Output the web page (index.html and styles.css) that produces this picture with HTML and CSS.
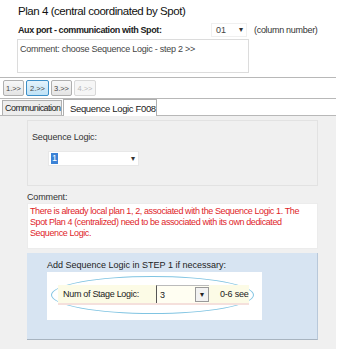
FILE: index.html
```html
<!DOCTYPE html>
<html lang="en">

<head>
    <meta charset="UTF-8">
    <title>Plan 4 - Sequence Logic</title>
    <link rel="stylesheet" href="styles.css">
</head>

<body>
    <div class="page">
        <div class="head">
            <h1 class="title">Plan 4 (central coordinated by Spot)</h1>
            <div class="aux-row">
                <span class="aux-label">Aux port - communication with Spot:</span>
                <span class="combo small">01<span class="arrow">&#9662;</span></span>
                <span class="hint">(column number)</span>
            </div>
            <div class="memo">Comment: choose Sequence Logic - step 2 &gt;&gt;</div>
        </div>

        <div class="steps">
            <span class="step">1.&gt;&gt;</span>
            <span class="step active">2.&gt;&gt;</span>
            <span class="step">3.&gt;&gt;</span>
            <span class="step disabled">4.&gt;&gt;</span>
        </div>

        <div class="tabs">
            <span class="tab">Communication</span>
            <span class="tab current">Sequence Logic F008</span>
        </div>

        <div class="panel">
            <div class="group">
                <div class="label">Sequence Logic:</div>
                <div class="combo wide"><span class="sel">1</span><span class="arrow">&#9662;</span></div>
            </div>

            <div class="label comment-label">Comment:</div>
            <div class="warn">There is already local plan 1, 2, associated with the Sequence Logic 1. The Spot Plan 4 (centralized) need to be associated with its own dedicated Sequence Logic.</div>

            <div class="blue">
                <div class="blue-text">Add Sequence Logic in STEP 1 if necessary:</div>
                <div class="white-box">
                    <div class="oval">
                        <div class="band">
                            <span class="band-label">Num of Stage Logic:</span>
                            <span class="combo boxed">3<span class="btn">&#9662;</span></span>
                            <span class="band-hint">0-6 see</span>
                        </div>
                    </div>
                </div>
            </div>
        </div>
    </div>
</body>

</html>
```

FILE: styles.css
```css
* {
    margin: 0;
    padding: 0;
    box-sizing: border-box;
}

body {
    font-family: "Liberation Sans", Arial, sans-serif;
    font-size: 9px;
    color: #222;
    background: #fff;
}

.page {
    width: 336px;
}

.head {
    padding: 4px 0 4px 17px;
    border-bottom: 1px solid #b8b8b8;
}

.title {
    font-size: 11.5px;
    letter-spacing: -0.45px;
    font-weight: normal;
    color: #111;
    padding: 1px 0 0 1px;
    height: 17px;
}

.aux-row {
    display: flex;
    align-items: center;
    height: 17px;
    padding-left: 1px;
}

.aux-label {
    font-weight: bold;
    font-size: 9px;
    letter-spacing: -0.4px;
    width: 193px;
}

.combo {
    position: relative;
    background: #fff;
    font-size: 9px;
    display: flex;
    align-items: center;
}

.combo .arrow {
    position: absolute;
    right: 3px;
    font-size: 8px;
    color: #333;
}

.combo.small {
    width: 36px;
    height: 14px;
    padding-left: 4px;
    border: 1px solid #f0f0f0;
    color: #444;
}

.hint {
    margin-left: 7px;
    letter-spacing: -0.3px;
    color: #333;
}

.memo {
    width: 232px;
    height: 34px;
    margin-top: 1px;
    border: 1px solid #dcdcdc;
    padding: 4px 2px;
    letter-spacing: -0.25px;
    color: #444;
}

.steps {
    display: flex;
    gap: 2px;
    padding: 2px 3px;
    height: 21px;
    border-bottom: 1px solid #b8b8b8;
}

.step {
    width: 21px;
    height: 16px;
    border: 1px solid #b0b0b0;
    border-radius: 2px;
    background: linear-gradient(#f8f8f8, #e4e4e4);
    font-size: 7.5px;
    display: flex;
    align-items: center;
    justify-content: center;
    color: #444;
}

.step.active {
    width: 23px;
    background: linear-gradient(#e4f3fc, #bfe2f6);
    border-color: #3c8fc8;
}

.step.disabled {
    width: 22px;
    color: #b8b8b8;
    background: #f6f6f6;
    border-color: #d8d8d8;
}

.tabs {
    display: flex;
    align-items: flex-end;
    height: 17px;
    padding-left: 2px;
    border-bottom: 1px solid #b8b8b8;
}

.tab {
    height: 15px;
    width: 60px;
    padding: 0 2px;
    border: 1px solid #b0b0b0;
    border-bottom: none;
    background: #ededed;
    letter-spacing: -0.55px;
    white-space: nowrap;
    display: flex;
    align-items: center;
    color: #222;
}

.tab.current {
    width: 94px;
    height: 17px;
    margin-left: 1px;
    margin-bottom: -1px;
    padding: 0 0 0 6px;
    background: #fff;
    font-size: 9.5px;
    letter-spacing: -0.35px;
}

.panel {
    background: #f0f0f0;
    padding: 4px 18px 10px 27px;
    height: 233px;
}

.group {
    height: 66px;
    border: 1px solid #e2e2e2;
    background: #f0f0f0;
    padding: 11px 0 0 4px;
}

.label {
    letter-spacing: -0.15px;
    color: #333;
}

.combo.wide {
    width: 91px;
    height: 15px;
    margin: 9px 0 0 16px;
    border: 1px solid #e8e8e8;
}

.sel {
    background: #3b82d6;
    color: #fff;
    padding: 0 1px;
    margin-left: 2px;
    line-height: 11px;
}

.comment-label {
    margin-top: 6px;
    height: 11px;
}

.warn {
    height: 46px;
    background: #fff;
    border: 1px solid #ececec;
    padding: 2px 2px;
    color: #e0252a;
    letter-spacing: -0.4px;
    line-height: 11px;
}

.blue {
    margin-top: 4px;
    height: 87px;
    background: #d7e4f2;
    border-right: 1px solid #b8c8da;
    border-bottom: 1px solid #a8b4c0;
    padding: 7px 0 0 20px;
}

.blue-text {
    color: #222;
    height: 12px;
}

.white-box {
    width: 215px;
    height: 48px;
    background: #fff;
    padding: 4px 8px 5px 4px;
}

.oval {
    height: 38px;
    border: 1px solid #80c4e2;
    border-radius: 50%;
    display: flex;
    align-items: center;
    padding: 0 4px 0 6px;
}

.band {
    flex: 1;
    height: 20px;
    background: #fcfbe6;
    border-bottom: 2px solid #f5e0dc;
    display: flex;
    align-items: center;
    padding-left: 5px;
}

.band-label {
    letter-spacing: -0.3px;
    width: 93px;
}

.combo.boxed {
    width: 53px;
    height: 18px;
    padding-left: 3px;
    border-left: 1px solid #555;
    border-top: 1px solid #bbb;
    background: #fffef2;
}

.combo .btn {
    position: absolute;
    right: 0;
    top: 1px;
    width: 14px;
    height: 15px;
    border: 1px solid #999;
    background: #f2f2f2;
    font-size: 8px;
    display: flex;
    align-items: center;
    justify-content: center;
}

.band-hint {
    margin-left: 11px;
    letter-spacing: -0.2px;
}
```
